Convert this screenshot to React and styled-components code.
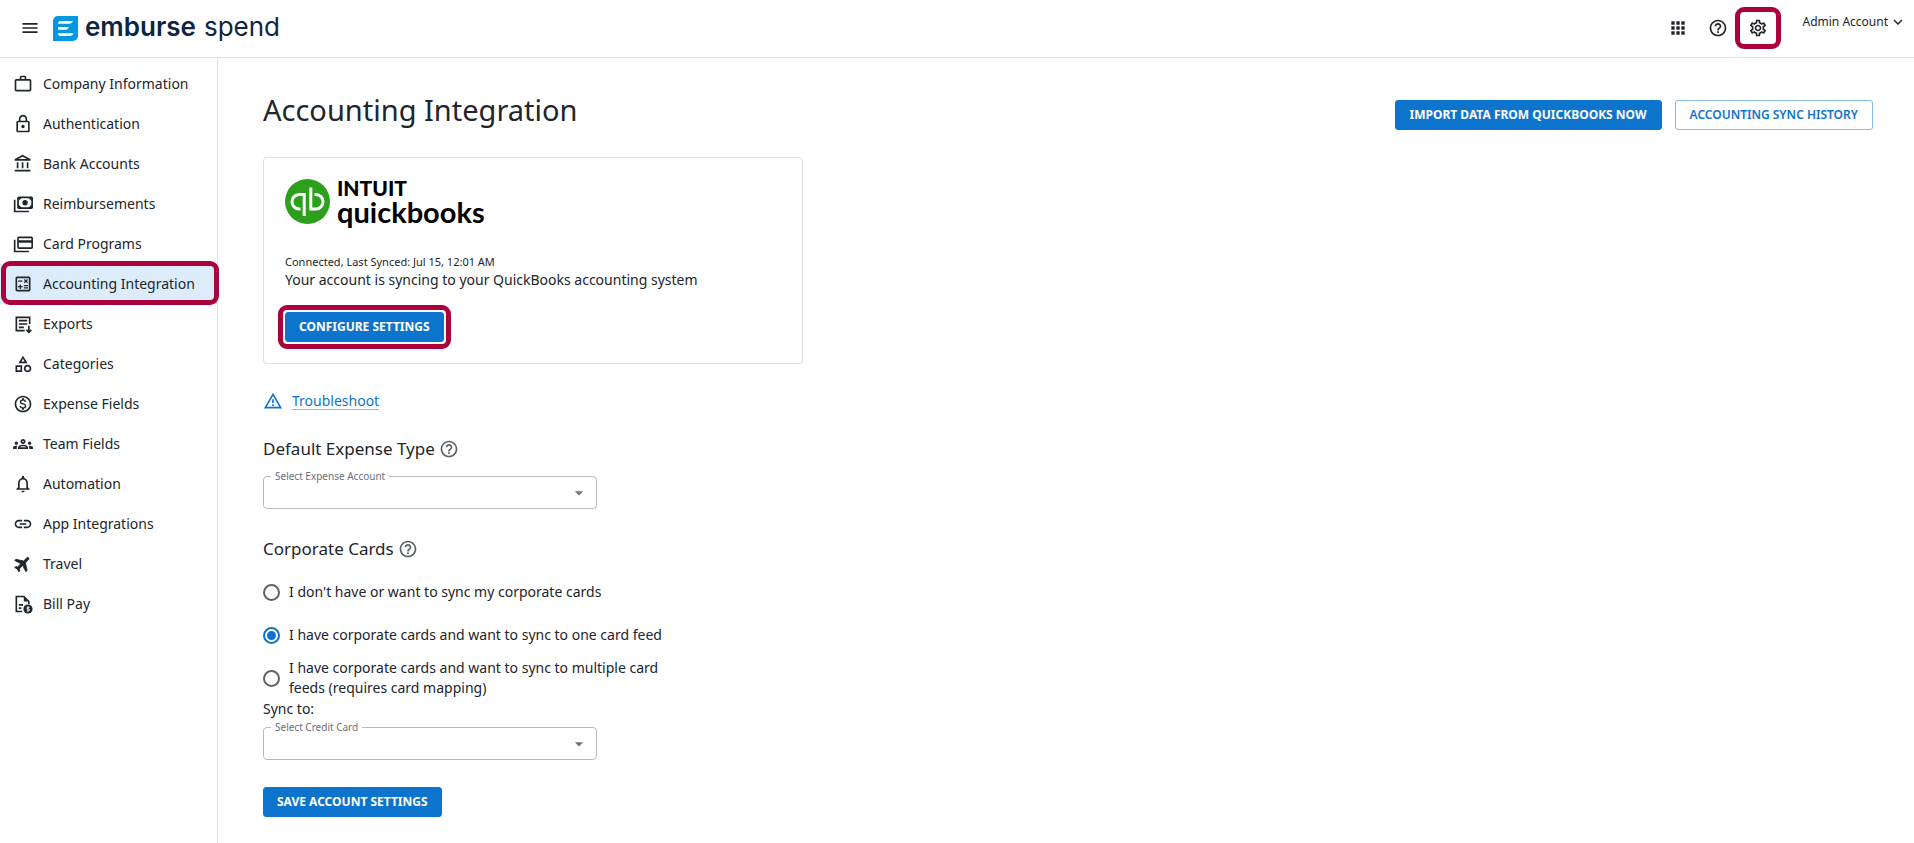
import { useState } from "react";
import styled, { createGlobalStyle, css } from "styled-components";
import {
  MdMenu,
  MdApps,
  MdHelpOutline,
  MdOutlineSettings,
  MdExpandMore,
  MdWorkOutline,
  MdOutlineLock,
  MdOutlineAccountBalance,
  MdOutlineCalculate,
  MdOutlineCategory,
  MdOutlineMonetizationOn,
  MdOutlineGroups,
  MdNotificationsNone,
  MdLink,
  MdFlight,
  MdArrowDropDown,
} from "react-icons/md";

const BLUE = "#0d74ce";
const INK = "#21252c";
const RED = "#ab013d";

const Icon = ({ children }) => (
  <svg width="1em" height="1em" viewBox="0 0 24 24" fill="none" stroke="currentColor" strokeWidth="2" aria-hidden="true">
    {children}
  </svg>
);

const CashIcon = () => (
  <Icon>
    <path d="M2 7v14h17" />
    <rect x="6" y="4" width="17" height="13" rx="1" />
    <circle cx="14.5" cy="10.5" r="3.2" fill="currentColor" stroke="none" />
    <path d="M6 4h5L6 9zM23 4h-5l5 5zM6 17h5l-5-5zM23 17h-5l5-5z" fill="currentColor" stroke="none" />
  </Icon>
);

const CardsIcon = () => (
  <Icon>
    <path d="M2 7v14h17" />
    <rect x="6" y="4" width="17" height="13" rx="1" />
    <path d="M6 9h17" strokeWidth="3" />
  </Icon>
);

const ExportIcon = () => (
  <Icon>
    <path d="M20 12V4H4v16h10" />
    <path d="M7 8h10M7 12h10M7 16h6" />
    <path d="M19 14v8M16 19l3 3 3-3" />
  </Icon>
);

const BillIcon = () => (
  <Icon>
    <path d="M11 21H4V3h9l6 6v3" />
    <path d="M13 3v6h6z" fill="currentColor" stroke="none" />
    <path d="M7 13h5M7 17h3" />
    <circle cx="18" cy="18" r="5.5" fill="currentColor" stroke="none" />
    <path d="M20 16h-3v2h2.5v2h-3M18 14.5v7" stroke="#fff" strokeWidth="1" />
  </Icon>
);

const WarningIcon = () => (
  <Icon>
    <path d="M12 4L2.8 20h18.4z" />
    <path d="M12 10v4.5M12 16v2" />
  </Icon>
);

const NAV = [
  ["Company Information", MdWorkOutline],
  ["Authentication", MdOutlineLock],
  ["Bank Accounts", MdOutlineAccountBalance],
  ["Reimbursements", CashIcon],
  ["Card Programs", CardsIcon],
  ["Accounting Integration", MdOutlineCalculate],
  ["Exports", ExportIcon],
  ["Categories", MdOutlineCategory],
  ["Expense Fields", MdOutlineMonetizationOn],
  ["Team Fields", MdOutlineGroups],
  ["Automation", MdNotificationsNone],
  ["App Integrations", MdLink],
  ["Travel", MdFlight],
  ["Bill Pay", BillIcon],
];

const CARD_OPTIONS = [
  ["none", "I don't have or want to sync my corporate cards"],
  ["one", "I have corporate cards and want to sync to one card feed"],
  ["many", "I have corporate cards and want to sync to multiple card feeds (requires card mapping)"],
];

function OutlinedSelect({ id, label, tight }) {
  return (
    <Field $tight={tight}>
      <legend>
        <label htmlFor={id}>{label}</label>
      </legend>
      <select id={id} defaultValue="">
        <option value=""></option>
      </select>
      <MdArrowDropDown />
    </Field>
  );
}

function App() {
  const [sync, setSync] = useState("one");

  return (
    <>
      <GlobalStyle />
      <Header>
        <IconButton aria-label="Menu">
          <MdMenu />
        </IconButton>
        <Brand href="#">
          <svg width="25" height="25" viewBox="0 0 25 25" aria-hidden="true">
            <path d="M5 0h20v20a5 5 0 0 1-5 5H0V5a5 5 0 0 1 5-5z" fill="#0598e2" />
            <path
              d="M7.5 5H20q-1 2.7-3.5 2.7H5Q5.2 5 7.5 5zM5 11h11q-1 2.7-3 2.7H5zM5 17.2h15.5q-1 2.7-3.5 2.7H7.5Q5 19.9 5 17.2z"
              fill="#fff"
            />
          </svg>
          <Wordmark>
            <b>emburse</b>
            <span>spend</span>
          </Wordmark>
        </Brand>
        <Actions>
          <IconButton aria-label="Apps">
            <MdApps />
          </IconButton>
          <IconButton aria-label="Help">
            <MdHelpOutline />
          </IconButton>
          <Marked $x={13} $y={11}>
            <IconButton aria-label="Settings">
              <MdOutlineSettings />
            </IconButton>
          </Marked>
        </Actions>
        <Account>
          Admin Account
          <MdExpandMore />
        </Account>
      </Header>
      <Body>
        <Sidebar>
          {NAV.map(([name, NavIcon]) => (
            <NavItem key={name} href="#" $active={name === "Accounting Integration"} $tilt={name === "Travel"}>
              <NavIcon />
              {name}
            </NavItem>
          ))}
        </Sidebar>
        <Main>
          <TitleRow>
            <h1>Accounting Integration</h1>
            <Button>Import data from QuickBooks now</Button>
            <Button $outlined>Accounting sync history</Button>
          </TitleRow>
          <Card>
            <QuickBooks>
              <svg width="45" height="45" viewBox="0 0 45 45" aria-hidden="true">
                <circle cx="22.5" cy="22.5" r="22.5" fill="#2ca01c" />
                <path
                  d="M15.5 30h-1.3a7.2 7.2 0 0 1 0-14.5h5v21.5M29.5 15.5h1.3a7.2 7.2 0 0 1 0 14.5h-5v-21.5"
                  fill="none"
                  stroke="#fff"
                  strokeWidth="3"
                />
              </svg>
              <div>
                <Intuit>INTUIT</Intuit>
                <Product>quickbooks</Product>
              </div>
            </QuickBooks>
            <Small>Connected, Last Synced: Jul 15, 12:01 AM</Small>
            <p>Your account is syncing to your QuickBooks accounting system</p>
            <Marked $x={7} $y={7}>
              <Button>Configure settings</Button>
            </Marked>
          </Card>
          <Troubleshoot href="#">
            <WarningIcon />
            <span>Troubleshoot</span>
          </Troubleshoot>
          <Heading>
            Default Expense Type
            <MdHelpOutline />
          </Heading>
          <OutlinedSelect id="expense" label="Select Expense Account" />
          <Heading $spaced>
            Corporate Cards
            <MdHelpOutline />
          </Heading>
          <Options>
            {CARD_OPTIONS.map(([value, text]) => (
              <Option key={value}>
                <input type="radio" name="sync" checked={sync === value} onChange={() => setSync(value)} />
                {text}
              </Option>
            ))}
          </Options>
          <p>Sync to:</p>
          <OutlinedSelect id="credit" label="Select Credit Card" tight />
          <Save>Save account settings</Save>
        </Main>
      </Body>
    </>
  );
}
export default App;

const GlobalStyle = createGlobalStyle`
  * {
    box-sizing: border-box;
  }

  body {
    margin: 0;
    background: #fff;
    color: ${INK};
    font: 14px/20px "Noto Sans", sans-serif;
  }

  #root {
    min-height: 100vh;
    display: flex;
    flex-direction: column;
  }

  h1, h2, p {
    margin: 0;
    font-weight: 400;
  }

  button, select {
    font: inherit;
    color: inherit;
  }

  svg {
    flex-shrink: 0;
  }
`;

const Header = styled.header`
  display: flex;
  align-items: center;
  height: 58px;
  padding: 0 7px 1px 20px;
  border-bottom: 1px solid #e0e0e0;
`;

const IconButton = styled.button`
  display: flex;
  padding: 0;
  border: 0;
  background: none;
  font-size: 20px;
  cursor: pointer;
`;

const Brand = styled.a`
  display: flex;
  align-items: flex-start;
  gap: 7px;
  margin-left: 13px;
  color: #10243f;
  text-decoration: none;
`;

const Wordmark = styled.span`
  display: flex;
  gap: 8px;
  font: 26px/22px Inter, sans-serif;

  b {
    font-weight: 600;
  }
`;

const Actions = styled.div`
  display: flex;
  gap: 20px;
  margin-left: auto;
`;

const Marked = styled.div`
  position: relative;
  width: fit-content;

  &::after {
    content: "";
    position: absolute;
    inset: ${({ $x, $y }) => `-${$y}px -${$x}px`};
    border: 5px solid ${RED};
    border-radius: 9px;
    pointer-events: none;
  }
`;

const Account = styled.button`
  display: flex;
  align-items: center;
  align-self: flex-start;
  gap: 1px;
  margin: 12px 0 0 34px;
  padding: 0;
  border: 0;
  background: none;
  font-size: 12px;
  line-height: 20px;

  svg {
    font-size: 18px;
  }
`;

const Body = styled.div`
  display: flex;
  flex: 1;
`;

const Sidebar = styled.nav`
  width: 218px;
  flex-shrink: 0;
  padding-top: 6px;
  border-right: 1px solid #e0e0e0;
`;

const NavItem = styled.a`
  position: relative;
  display: flex;
  align-items: center;
  gap: 10px;
  height: 40px;
  padding-left: 13px;
  color: ${INK};
  text-decoration: none;

  svg {
    font-size: 20px;
  }

  ${({ $tilt }) =>
    $tilt &&
    css`
      svg {
        transform: rotate(45deg);
      }

      path:not([fill="none"]) {
        stroke: currentColor;
        stroke-width: 1px;
      }
    `}

  ${({ $active }) =>
    $active &&
    css`
      background: #dcecfb;

      &::after {
        content: "";
        position: absolute;
        inset: -3px -2px -1px 1px;
        border: 5px solid ${RED};
        border-radius: 9px;
      }
    `}
`;

const Main = styled.main`
  flex: 1;
  padding: 32px 41px 24px 45px;
`;

const Button = styled.button`
  height: 30px;
  padding: 0 13px;
  border: 1px solid ${({ $outlined }) => ($outlined ? "#86b9e6" : BLUE)};
  border-radius: 3px;
  background: ${({ $outlined }) => ($outlined ? "#fff" : BLUE)};
  color: ${({ $outlined }) => ($outlined ? BLUE : "#fff")};
  font-size: 12px;
  font-weight: ${({ $outlined }) => ($outlined ? 600 : 700)};
  text-transform: uppercase;
  cursor: pointer;
`;

const TitleRow = styled.div`
  display: flex;
  align-items: flex-end;
  gap: 13px;
  margin-bottom: 27px;

  h1 {
    margin-right: auto;
    font-size: 29px;
    line-height: 40px;
  }

  ${Button} {
    padding: 0 14px;
  }
`;

const Card = styled.section`
  max-width: 540px;
  padding: 21px;
  border: 1px solid #dedfe0;
  border-radius: 4px;

  p + div {
    margin-top: 22px;
  }
`;

const QuickBooks = styled.div`
  display: flex;
  gap: 7px;
  height: 75px;
  color: #000;
`;

const Intuit = styled.div`
  font: 900 21px/18px Lato, sans-serif;
`;

const Product = styled.div`
  font: 700 29px/30px Lato, sans-serif;
`;

const Small = styled.p`
  font-size: 11px;
  line-height: 16px;
`;

const Troubleshoot = styled.a`
  display: flex;
  align-items: center;
  gap: 9px;
  width: fit-content;
  margin-top: 27px;
  color: ${BLUE};
  text-decoration: none;

  svg {
    font-size: 20px;
  }

  span {
    line-height: 16px;
    border-bottom: 1px solid #86b9e6;
  }
`;

const Heading = styled.h2`
  display: flex;
  align-items: center;
  gap: 4px;
  margin-top: ${({ $spaced }) => ($spaced ? 28 : 26)}px;
  font-size: 17px;
  line-height: 24px;

  svg {
    color: #5c6069;
    font-size: 20px;
  }
`;

const Field = styled.fieldset`
  display: grid;
  align-items: center;
  width: 334px;
  margin: ${({ $tight }) => ($tight ? 2 : 9)}px 0 0;
  padding: 0;
  border: 1px solid #b9babd;
  border-radius: 4px;

  legend {
    margin-left: 7px;
    padding: 0 4px;
    color: #6b6f76;
    font-size: 10px;
    line-height: 12px;
  }

  select {
    grid-area: 1 / 1;
    height: 26px;
    padding: 0 12px;
    border: 0;
    background: none;
    appearance: none;
  }

  svg {
    grid-area: 1 / 1;
    justify-self: end;
    margin: 0 7px 5px 0;
    color: #6f7277;
    font-size: 20px;
    pointer-events: none;
  }
`;

const Options = styled.div`
  display: flex;
  flex-direction: column;
  gap: 1px;
  width: 400px;
  margin-top: 10px;
`;

const Option = styled.label`
  display: flex;
  align-items: center;
  gap: 9px;
  min-height: 42px;

  input {
    display: grid;
    place-content: center;
    flex-shrink: 0;
    width: 17px;
    height: 17px;
    margin: 0;
    border: 2px solid #5f636c;
    border-radius: 50%;
    appearance: none;
  }

  input:checked {
    border-color: ${BLUE};
  }

  input:checked::before {
    content: "";
    width: 9px;
    height: 9px;
    border-radius: 50%;
    background: ${BLUE};
  }
`;

const Save = styled(Button)`
  display: block;
  margin-top: 27px;
`;
